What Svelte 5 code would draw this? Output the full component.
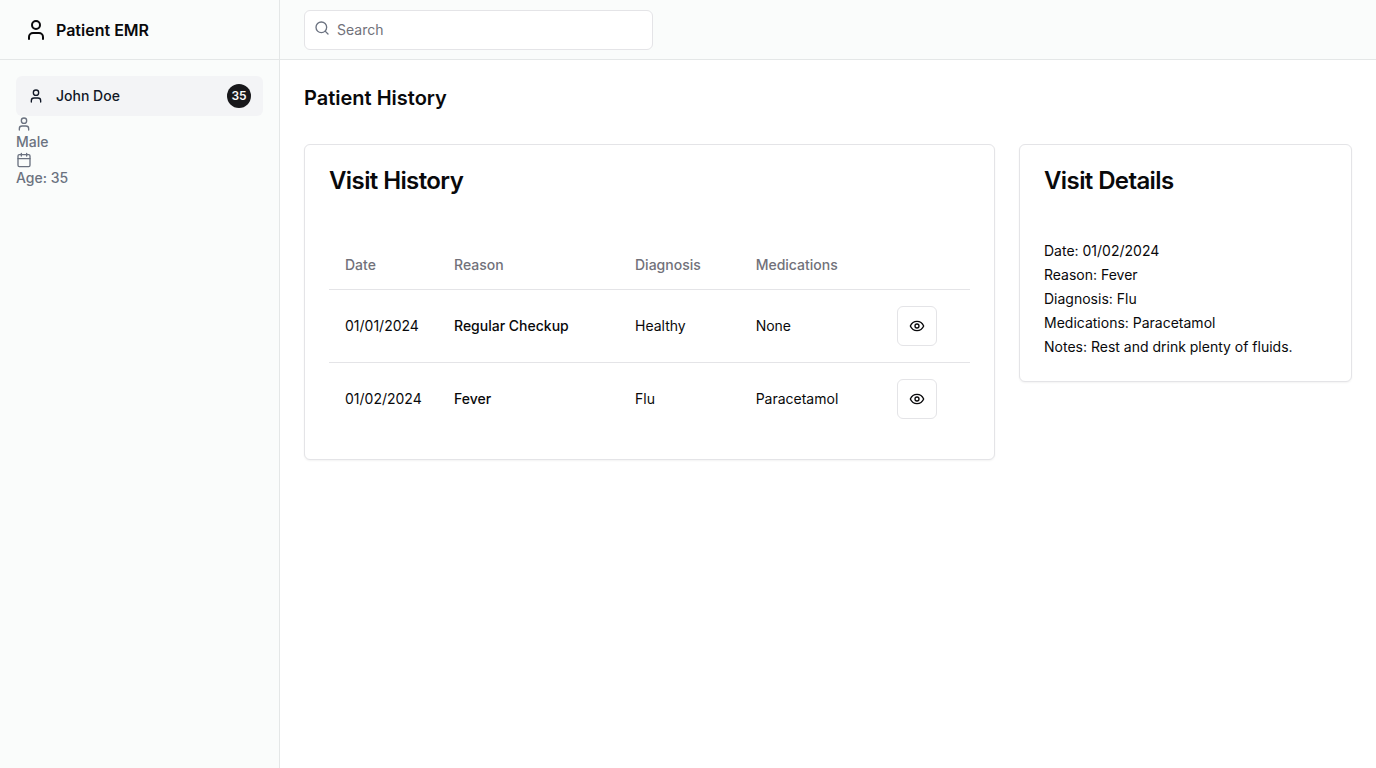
<script>
  const visits = [
    { date: '01/01/2024', reason: 'Regular Checkup', diagnosis: 'Healthy', medications: 'None', notes: 'No issues found.' },
    { date: '01/02/2024', reason: 'Fever', diagnosis: 'Flu', medications: 'Paracetamol', notes: 'Rest and drink plenty of fluids.' }
  ];
  let query = $state('');
  let selected = $state(1);
  let current = $derived(visits[selected]);
</script>

{#snippet person()}
  <svg class="icon" viewBox="0 0 24 24" aria-hidden="true"><path d="M19 21v-2a4 4 0 0 0-4-4H9a4 4 0 0 0-4 4v2" /><circle cx="12" cy="7" r="4" /></svg>
{/snippet}

<div class="shell">
  <aside>
    <div class="brand">
      <a href="#home">{@render person()}<span>Patient EMR</span></a>
    </div>
    <nav>
      <a class="patient" href="#john">{@render person()}<span>John Doe</span><span class="badge">35</span></a>
      <div class="fact">{@render person()}<span>Male</span></div>
      <div class="fact">
        <svg class="icon" viewBox="0 0 24 24" aria-hidden="true"><path d="M8 2v4M16 2v4M3 10h18" /><rect x="3" y="4" width="18" height="18" rx="2" /></svg>
        <span>Age: 35</span>
      </div>
    </nav>
  </aside>
  <div class="content">
    <header>
      <label class="search">
        <svg class="icon" viewBox="0 0 24 24" aria-hidden="true"><circle cx="11" cy="11" r="8" /><path d="m21 21-4.3-4.3" /></svg>
        <input type="search" placeholder="Search" aria-label="Search" bind:value={query} />
      </label>
    </header>
    <main>
      <h1>Patient History</h1>
      <div class="panels">
        <section class="card history">
          <h2>Visit History</h2>
          <table>
            <thead>
              <tr><th class="date">Date</th><th class="reason">Reason</th><th>Diagnosis</th><th>Medications</th><th></th></tr>
            </thead>
            <tbody>
              {#each visits as visit, i}
                <tr>
                  <td>{visit.date}</td>
                  <td class="strong">{visit.reason}</td>
                  <td>{visit.diagnosis}</td>
                  <td>{visit.medications}</td>
                  <td>
                    <button type="button" aria-label="View visit {visit.date}" onclick={() => (selected = i)}>
                      <svg class="icon" viewBox="0 0 24 24" aria-hidden="true"><path d="M2 12s3-7 10-7 10 7 10 7-3 7-10 7-10-7-10-7Z" /><circle cx="12" cy="12" r="3" /></svg>
                    </button>
                  </td>
                </tr>
              {/each}
            </tbody>
          </table>
        </section>
        <section class="card details">
          <h2>Visit Details</h2>
          <div class="lines">
            <p>Date: {current.date}</p>
            <p>Reason: {current.reason}</p>
            <p>Diagnosis: {current.diagnosis}</p>
            <p>Medications: {current.medications}</p>
            <p>Notes: {current.notes}</p>
          </div>
        </section>
      </div>
    </main>
  </div>
</div>

<style>
  :global(body) { background: #fff; }
  .shell, .shell * { box-sizing: border-box; }
  .shell {
    display: grid;
    grid-template-columns: 280px minmax(0, 1fr);
    min-height: 100vh;
    font-family: Inter, sans-serif;
    font-size: 14px;
    line-height: 20px;
    color: #09090b;
  }
  .icon {
    display: block;
    flex: none;
    width: 16px;
    height: 16px;
    fill: none;
    stroke: currentColor;
    stroke-width: 2;
    stroke-linecap: round;
    stroke-linejoin: round;
  }
  aside { background: #fafcfb; border-right: 1px solid #e4e7e7; }
  a { color: inherit; text-decoration: none; }
  .brand {
    display: flex;
    align-items: center;
    height: 60px;
    padding: 0 24px;
    border-bottom: 1px solid #e4e7e7;
  }
  .brand a { display: flex; align-items: center; gap: 8px; font-size: 16px; font-weight: 600; line-height: 24px; }
  .brand .icon { width: 24px; height: 24px; }
  nav { padding: 16px; font-weight: 500; }
  .patient {
    display: flex;
    align-items: center;
    gap: 12px;
    height: 40px;
    padding: 0 12px;
    border-radius: 6px;
    background: #f3f4f6;
    color: #111827;
  }
  .badge {
    display: flex;
    align-items: center;
    justify-content: center;
    width: 24px;
    height: 24px;
    margin-left: auto;
    border-radius: 50%;
    background: #18181b;
    color: #fafafa;
    font-size: 12px;
    font-weight: 600;
    line-height: 16px;
  }
  .fact { color: #6b7280; }
  .fact span { display: block; }
  header {
    display: flex;
    align-items: center;
    height: 60px;
    padding: 0 24px;
    background: #fafcfb;
    border-bottom: 1px solid #e4e7e7;
  }
  .search { position: relative; width: 33.3333%; }
  .search .icon { position: absolute; top: 10px; left: 10px; color: #6b7280; }
  input {
    display: block;
    width: 100%;
    height: 40px;
    padding: 8px 12px 8px 32px;
    border: 1px solid #e4e4e7;
    border-radius: 6px;
    background: #fff;
    color: inherit;
    font: inherit;
    appearance: none;
  }
  input::placeholder { color: #71717a; opacity: 1; }
  main { display: flex; flex-direction: column; gap: 32px; padding: 24px; }
  h1, h2, p { margin: 0; }
  h1 { font-size: 20px; font-weight: 600; line-height: 28px; }
  .panels { display: grid; grid-template-columns: minmax(0, 691fr) minmax(0, 333fr); align-items: start; gap: 24px; }
  .card { padding: 24px; border: 1px solid #e4e4e7; border-radius: 6px; background: #fff; box-shadow: 0 1px 2px rgb(0 0 0 / 5%); }
  h2 { font-size: 24px; font-weight: 600; line-height: 24px; letter-spacing: -0.025em; }
  .details { padding-bottom: 22px; }
  .lines { padding-top: 46px; line-height: 24px; }
  table { width: 100%; margin-top: 48px; border-collapse: collapse; }
  th { height: 48px; padding: 0 16px; color: #71717a; font-weight: 500; text-align: left; }
  .date { width: 109px; }
  .reason { width: 181px; }
  td { padding: 16px; }
  tr { border-bottom: 1px solid #e4e4e7; }
  tbody tr:last-child { border-bottom: 0; }
  .strong { font-weight: 500; }
  button {
    display: flex;
    align-items: center;
    justify-content: center;
    width: 40px;
    height: 40px;
    padding: 0;
    border: 1px solid #e4e4e7;
    border-radius: 6px;
    background: #fff;
    color: inherit;
    cursor: pointer;
  }
</style>
